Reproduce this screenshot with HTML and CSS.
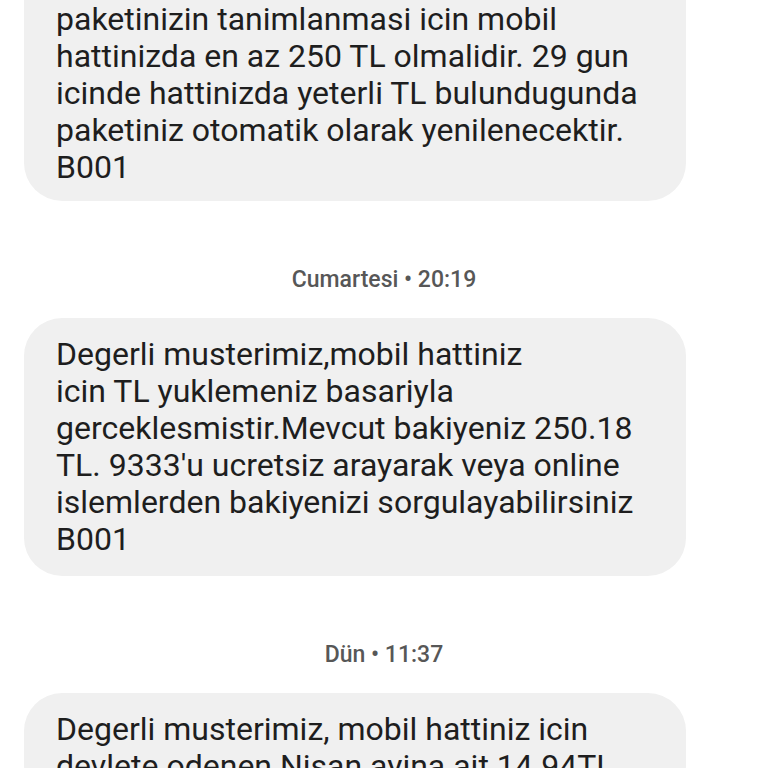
FILE: index.html
```html
<!DOCTYPE html>
<html lang="tr">
<head>
<meta charset="utf-8">
<link rel="stylesheet" href="styles.css">
</head>
<body>
<div class="thread">
  <div class="bubble bubble-first">
    <p class="msg">paketinizin tanimlanmasi icin mobil<br>hattinizda en az 250 TL olmalidir. 29 gun<br>icinde hattinizda yeterli TL bulundugunda<br>paketiniz otomatik olarak yenilenecektir.<br>B001</p>
  </div>
  <div class="stamp">Cumartesi • 20:19</div>
  <div class="bubble">
    <p class="msg">Degerli musterimiz,mobil hattiniz<br>icin TL yuklemeniz basariyla<br>gerceklesmistir.Mevcut bakiyeniz 250.18<br>TL. 9333'u ucretsiz arayarak veya online<br>islemlerden bakiyenizi sorgulayabilirsiniz<br>B001</p>
  </div>
  <div class="stamp">Dün • 11:37</div>
  <div class="bubble">
    <p class="msg">Degerli musterimiz, mobil hattiniz icin<br>devlete odenen Nisan ayina ait 14.94TL</p>
  </div>
</div>
</body>
</html>
```
FILE: styles.css
```css
html, body {
  margin: 0;
  padding: 0;
  background: #ffffff;
}
body {
  width: 768px;
  height: 768px;
  overflow: hidden;
  font-family: Roboto, "Noto Sans", sans-serif;
}
.thread {
  display: flex;
  flex-direction: column;
  padding: 0 82px 0 24px;
}
.bubble {
  background: #f0f0f0;
  border-radius: 38px;
  padding: 18px 32px;
}
.bubble-first {
  margin-top: -60px;
  padding-top: 61px;
  padding-bottom: 15px;
}
.msg {
  margin: 0;
  font-size: 32px;
  line-height: 37px;
  color: #1e1e1e;
  white-space: nowrap;
}
.stamp {
  margin: 67px 0 26px;
  text-align: center;
  font-size: 23px;
  line-height: 24px;
  font-weight: 500;
  color: #575757;
  padding-left: 58px;
}
```
